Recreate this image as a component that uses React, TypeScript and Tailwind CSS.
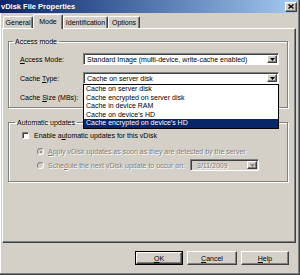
import React from "react";

const sunken =
  "border border-t-[#808080] border-l-[#808080] border-b-white border-r-white shadow-[inset_1px_1px_0_#404040]";
const raised =
  "border border-t-white border-l-white border-b-[#404040] border-r-[#404040] shadow-[inset_-1px_-1px_0_#808080]";
const etched =
  "border border-[#808080] shadow-[1px_1px_0_#fff,inset_1px_1px_0_#fff]";
const disabledText = "text-[#808080] [text-shadow:1px_1px_0_#fff]";

function Arrow({ color = "#000" }: { color?: string }) {
  return (
    <svg width="5" height="3" viewBox="0 0 5 3">
      <path d="M0 0h5L2.5 3z" fill={color} />
    </svg>
  );
}

function DropBtn({ disabled = false }: { disabled?: boolean }) {
  return (
    <div
      className={`w-[10px] h-full bg-[#d4d0c8] flex items-center justify-center ${raised} shadow-[inset_-1px_-1px_0_#808080,inset_1px_1px_0_#d4d0c8]`}
    >
      <Arrow color={disabled ? "#808080" : "#000"} />
    </div>
  );
}

function U({ children }: { children: React.ReactNode }) {
  return <span className="underline underline-offset-1">{children}</span>;
}

function Tab({
  label,
  width,
  selected = false,
}: {
  label: React.ReactNode;
  width: string;
  selected?: boolean;
}) {
  if (selected) {
    return (
      <div
        className={`${width} h-[15px] relative z-10 -mb-px bg-[#d4d0c8] border-l border-t border-r border-l-white border-t-white border-r-[#404040] rounded-t-[2px] shadow-[inset_-1px_0_0_#808080] flex items-center justify-center pb-[2px]`}
      >
        {label}
      </div>
    );
  }
  return (
    <div
      className={`${width} h-[12px] bg-[#d4d0c8] border-l border-t border-r border-l-white border-t-white border-r-[#404040] rounded-t-[2px] shadow-[inset_-1px_0_0_#808080] flex items-center justify-center`}
    >
      {label}
    </div>
  );
}

function Button({
  children,
  width,
  isDefault = false,
}: {
  children: React.ReactNode;
  width: string;
  isDefault?: boolean;
}) {
  if (isDefault) {
    return (
      <div className={`${width} h-[14px] border border-black`}>
        <div className={`w-full h-full ${raised} flex items-center justify-center`}>
          {children}
        </div>
      </div>
    );
  }
  return (
    <div className={`${width} h-[14px] ${raised} flex items-center justify-center`}>
      {children}
    </div>
  );
}

export default function App() {
  const cacheItems = [
    "Cache on server disk",
    "Cache encrypted on server disk",
    "Cache in device RAM",
    "Cache on device's HD",
    "Cache encrypted on device's HD",
  ];
  return (
    <div className="w-[300px] h-[275px] bg-[#d4d0c8] flex flex-col text-[7px] leading-[9px] text-black font-['Liberation_Sans',Arial,sans-serif] shadow-[inset_-1px_-1px_0_#404040,inset_-2px_-2px_0_#808080,inset_1px_1px_0_#fff] overflow-hidden">
      {/* Title bar */}
      <div className="h-[13px] mr-[2px] flex items-center pl-[1px] pr-[1px] bg-gradient-to-r from-[#0a246a] to-[#a6caf0]">
        <span className="text-white font-bold text-[7.5px]">vDisk File Properties</span>
        <div
          className={`ml-auto w-[12px] h-[10px] bg-[#d4d0c8] flex items-center justify-center ${raised}`}
        >
          <svg width="6" height="5" viewBox="0 0 6 5">
            <path d="M0.5 0.5L5.5 4.5M5.5 0.5L0.5 4.5" stroke="#000" strokeWidth="1.3" />
          </svg>
        </div>
      </div>

      {/* Tabs + panel */}
      <div className="ml-[2px] w-[294px] flex flex-col">
        <div className="h-[15px] flex items-end pl-[1px]">
          <Tab width="w-[30px]" label="General" />
          <Tab width="w-[30px]" label="Mode" selected />
          <Tab width="w-[45px]" label="Identification" />
          <Tab width="w-[32px]" label="Options" />
        </div>
        <div className="h-[215px] border border-t-white border-l-white border-b-[#404040] border-r-[#404040] shadow-[inset_-1px_-1px_0_#808080] flex flex-col pt-[8px]">
          {/* Access mode group */}
          <fieldset className={`ml-[5px] w-[280px] p-0 m-0 ${etched}`}>
            <legend className="ml-[4px] px-[2px] leading-[9px]">Access mode</legend>
            <div className="flex flex-col gap-[7px] mt-[7px] pb-[4px] pl-[11px]">
              <div className="h-[12px] flex items-center">
                <span className="w-[63px]">
                  <U>A</U>ccess Mode:
                </span>
                <div className={`w-[196px] h-[12px] bg-white ${sunken} flex items-center p-px`}>
                  <span className="flex-1 pl-[2px] whitespace-nowrap overflow-hidden">
                    Standard Image (multi-device, write-cache enabled)
                  </span>
                  <DropBtn />
                </div>
              </div>
              <div className="h-[12px] flex items-center">
                <span className="w-[63px]">
                  Cache <U>T</U>ype:
                </span>
                <div className="relative">
                  <div className={`w-[196px] h-[12px] bg-white ${sunken} flex items-center p-px`}>
                    <span className="flex-1 pl-[2px] whitespace-nowrap overflow-hidden">
                      Cache on server disk
                    </span>
                    <DropBtn />
                  </div>
                  <div className="absolute left-0 top-full w-[196px] bg-white border border-black z-20 flex flex-col">
                    {cacheItems.map((it, i) => (
                      <div
                        key={it}
                        className={`h-[8.6px] leading-[8.6px] pl-[2px] whitespace-nowrap ${
                          i === 4 ? "bg-[#0a246a] text-white" : ""
                        }`}
                      >
                        {it}
                      </div>
                    ))}
                  </div>
                </div>
              </div>
              <div className="h-[12px] flex items-center">
                <span className="w-[63px]">
                  Cache <U>S</U>ize (MBs):
                </span>
              </div>
            </div>
          </fieldset>

          {/* Automatic updates group */}
          <fieldset className={`ml-[5px] mt-[10px] w-[280px] p-0 m-0 ${etched}`}>
            <legend className="ml-[6px] px-[2px] leading-[9px]">Automatic updates</legend>
            <div className="flex flex-col mt-[4px] pb-[10px] pl-[13px]">
              <div className="h-[9px] flex items-center gap-[5px]">
                <div className={`w-[7px] h-[7px] bg-white ${sunken}`} />
                <span>
                  Enable a<U>u</U>tomatic updates for this vDisk
                </span>
              </div>
              <div className="h-[9px] mt-[7px] flex items-center gap-[4px] pl-[15px]">
                <div className="w-[7px] h-[7px] rounded-full bg-[#d4d0c8] border border-t-[#808080] border-l-[#808080] border-b-white border-r-white flex items-center justify-center">
                  <div className="w-[2px] h-[2px] rounded-full bg-[#808080]" />
                </div>
                <span className={disabledText}>
                  <U>A</U>pply vDisk updates as soon as they are detected by the server
                </span>
              </div>
              <div className="h-[12px] mt-[3px] flex items-center gap-[4px] pl-[15px]">
                <div className="w-[7px] h-[7px] rounded-full bg-[#d4d0c8] border border-t-[#808080] border-l-[#808080] border-b-white border-r-white" />
                <span className={`w-[138px] ${disabledText}`}>
                  Sche<U>d</U>ule the next vDisk update to occur on:
                </span>
                <div className={`w-[69px] h-[12px] bg-[#d4d0c8] ${sunken} flex items-center p-px`}>
                  <span className={`flex-1 pl-[5px] ${disabledText}`}>3/11/2009</span>
                  <DropBtn disabled />
                </div>
              </div>
            </div>
          </fieldset>
        </div>
      </div>

      {/* Buttons */}
      <div className="mt-[8px] flex justify-end gap-[4px] pr-[11px]">
        <Button width="w-[48px]" isDefault>
          <span>
            <U>O</U>K
          </span>
        </Button>
        <Button width="w-[50px]">
          <span>
            <U>C</U>ancel
          </span>
        </Button>
        <Button width="w-[48px]">
          <span>
            <U>H</U>elp
          </span>
        </Button>
      </div>
    </div>
  );
}
